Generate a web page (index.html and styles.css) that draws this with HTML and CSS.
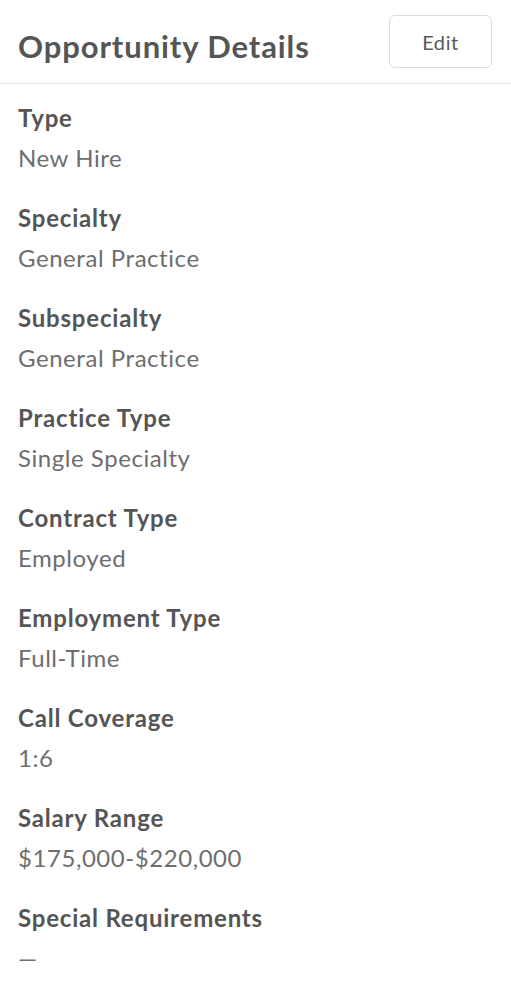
FILE: index.html
```html
<!DOCTYPE html>
<html lang="en">
<head>
    <meta charset="UTF-8">
    <meta name="viewport" content="width=device-width, initial-scale=1.0">
    <title>Opportunity Details</title>
    <link rel="stylesheet" href="styles.css">
</head>
<body>
    <section class="card">
        <header class="card-header">
            <h1>Opportunity Details</h1>
            <button class="edit-button">Edit</button>
        </header>
        <dl class="details">
            <div class="detail">
                <dt>Type</dt>
                <dd>New Hire</dd>
            </div>
            <div class="detail">
                <dt>Specialty</dt>
                <dd>General Practice</dd>
            </div>
            <div class="detail">
                <dt>Subspecialty</dt>
                <dd>General Practice</dd>
            </div>
            <div class="detail">
                <dt>Practice Type</dt>
                <dd>Single Specialty</dd>
            </div>
            <div class="detail">
                <dt>Contract Type</dt>
                <dd>Employed</dd>
            </div>
            <div class="detail">
                <dt>Employment Type</dt>
                <dd>Full-Time</dd>
            </div>
            <div class="detail">
                <dt>Call Coverage</dt>
                <dd>1:6</dd>
            </div>
            <div class="detail">
                <dt>Salary Range</dt>
                <dd>$175,000-$220,000</dd>
            </div>
            <div class="detail">
                <dt>Special Requirements</dt>
                <dd>&mdash;</dd>
            </div>
        </dl>
    </section>
</body>
</html>
```

FILE: styles.css
```css
/* General Styling */
body {
    font-family: Lato, 'Open Sans', sans-serif;
    margin: 0;
    padding: 0;
    background-color: #ffffff;
    color: #555555;
}

.card {
    background-color: #ffffff;
}

/* Header */
.card-header {
    height: 84px;
    box-sizing: border-box;
    display: flex;
    align-items: center;
    justify-content: space-between;
    padding: 0 19px 0 18px;
    border-bottom: 1px solid #e6e6e6;
}

.card-header h1 {
    margin: 0;
    font-size: 31px;
    font-weight: bold;
    letter-spacing: 0.9px;
    color: #555555;
    padding-top: 8px;
}

.edit-button {
    font-family: inherit;
    font-size: 20px;
    letter-spacing: 0.6px;
    color: #5a5a5a;
    background-color: #ffffff;
    border: 1px solid #dddddd;
    border-radius: 6px;
    width: 103px;
    height: 53px;
    cursor: pointer;
}

/* Detail list */
.details {
    margin: 0;
    padding: 14px 18px 0;
    display: flex;
    flex-direction: column;
    gap: 20px;
}

.detail dt {
    font-size: 24px;
    font-weight: bold;
    letter-spacing: 0.8px;
    line-height: 40px;
    color: #555555;
}

.detail dd {
    margin: 0;
    font-size: 24px;
    letter-spacing: 0.55px;
    line-height: 40px;
    color: #6e6e6e;
}
```
